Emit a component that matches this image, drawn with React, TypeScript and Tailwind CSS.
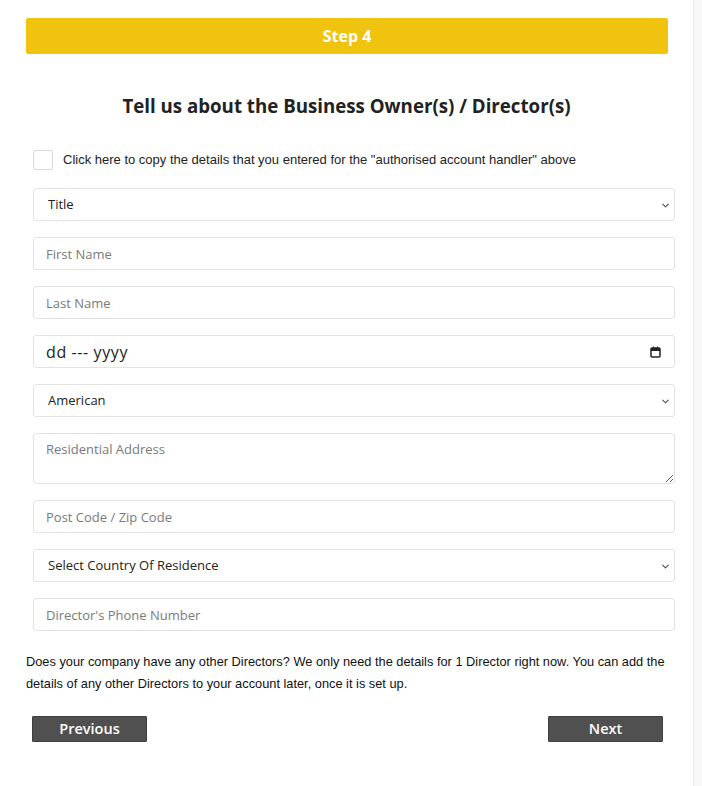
import { ChevronDown } from "lucide-react";

const inputBox =
  "h-[33px] w-full rounded-[3px] border border-[#e3e3e3] bg-white px-3 text-[13px] text-[#222] placeholder:text-[#7a7a7a] outline-none";

function SelectField({ label }: { label: string }) {
  return (
    <div className="relative">
      <select
        className={`${inputBox} appearance-none pl-[14px] font-['Open_Sans',sans-serif]`}
        defaultValue={label}
      >
        <option>{label}</option>
      </select>
      <ChevronDown
        className="pointer-events-none absolute right-[4px] top-[12px] h-[11px] w-[11px] text-[#555]"
        strokeWidth={2.5}
      />
    </div>
  );
}

function TextField({ placeholder }: { placeholder: string }) {
  return (
    <input
      type="text"
      placeholder={placeholder}
      className={`${inputBox} font-['Open_Sans',sans-serif]`}
    />
  );
}

export default function App() {
  return (
    <div className="flex min-h-[786px] w-[702px] bg-white">
      <div className="w-[693px] px-[26px] pt-[18px] pb-10">
        {/* Step header */}
        <div className="flex h-[36px] w-[642px] items-center justify-center rounded-[2px] bg-[#f0c30f]">
          <span className="font-['Open_Sans',sans-serif] text-[16px] font-bold text-white">
            Step 4
          </span>
        </div>

        <h2 className="mt-[38px] text-center font-['Open_Sans',sans-serif] text-[18.7px] font-bold text-[#222]">
          Tell us about the Business Owner(s) / Director(s)
        </h2>

        {/* copy checkbox */}
        <label className="mt-[30px] ml-[7px] flex items-center gap-[10px]">
          <span className="h-[20px] w-[20px] rounded-[2px] border border-[#d9d9d9] bg-white" />
          <span className="font-['Liberation_Sans',sans-serif] text-[13px] text-[#222]">
            Click here to copy the details that you entered for the "authorised account handler" above
          </span>
        </label>

        <div className="mt-[18px] ml-[7px] flex w-[642px] flex-col gap-[16px]">
          <SelectField label="Title" />
          <TextField placeholder="First Name" />
          <TextField placeholder="Last Name" />
          <div className={`${inputBox} flex items-center justify-between pr-[13px] font-['Open_Sans',sans-serif] text-[16px] tracking-[0.6px]`}>
            <span>dd --- yyyy</span>
            <svg width="11" height="12" viewBox="0 0 11 12" className="text-[#222]">
              <rect x="1" y="2" width="9" height="9" rx="1" fill="none" stroke="currentColor" strokeWidth="1.5" />
              <rect x="1" y="2" width="9" height="3" fill="currentColor" />
              <rect x="3" y="0.5" width="1" height="2" fill="currentColor" />
              <rect x="7" y="0.5" width="1" height="2" fill="currentColor" />
            </svg>
          </div>
          <SelectField label="American" />
          <textarea
            placeholder="Residential Address"
            className="h-[51px] w-full rounded-[3px] border border-[#e3e3e3] bg-white px-3 pt-[6px] font-['Open_Sans',sans-serif] text-[13px] text-[#222] outline-none placeholder:text-[#7a7a7a]"
          />
          <TextField placeholder="Post Code / Zip Code" />
          <SelectField label="Select Country Of Residence" />
          <TextField placeholder="Director's Phone Number" />
        </div>

        <p className="mt-[20px] w-[645px] font-['Liberation_Sans',sans-serif] text-[12.8px] leading-[22px] text-[#111]">
          Does your company have any other Directors? We only need the details for 1 Director right now. You can add the details of any other Directors to your account later, once it is set up.
        </p>

        <div className="mt-[21px] flex w-[637px] justify-between pl-[6px]">
          <button className="h-[26px] w-[115px] rounded-[1px] border border-[#3f3f3f] bg-[#505050] font-['Open_Sans',sans-serif] text-[14.5px] font-semibold text-white">
            Previous
          </button>
          <button className="h-[26px] w-[115px] rounded-[1px] border border-[#3f3f3f] bg-[#505050] font-['Open_Sans',sans-serif] text-[14.5px] font-semibold text-white">
            Next
          </button>
        </div>
      </div>
      <div className="w-[9px] border-l border-[#ececec] bg-[#f8f8f8]" />
    </div>
  );
}
